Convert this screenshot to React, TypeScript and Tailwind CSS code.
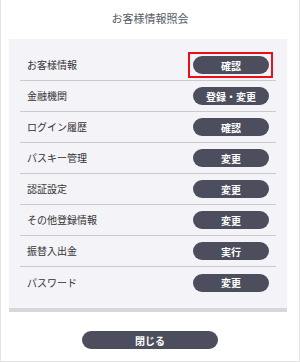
import React from "react";

const rows: { label: string; action: string; highlight?: boolean }[] = [
  { label: "お客様情報", action: "確認", highlight: true },
  { label: "金融機関", action: "登録・変更" },
  { label: "ログイン履歴", action: "確認" },
  { label: "パスキー管理", action: "変更" },
  { label: "認証設定", action: "変更" },
  { label: "その他登録情報", action: "変更" },
  { label: "振替入出金", action: "実行" },
  { label: "パスワード", action: "変更" },
];

export default function App() {
  return (
    <div
      className="w-[300px] h-[362px] bg-white border-x border-b border-[#e3e3e3] flex flex-col"
      style={{ fontFamily: '"Noto Sans CJK JP", "Noto Sans", sans-serif' }}
    >
      <div className="h-[39px] flex items-center justify-center text-[11px] text-[#555a66] pb-[3px]">
        お客様情報照会
      </div>
      <div className="mx-[8px] w-[278px] bg-[#f4f4f8] border-b-[4px] border-[#d7d7d9] pt-[11px] pb-[10px]">
        {rows.map((r, i) => (
          <div
            key={r.label}
            className={`mx-[11px] h-[31px] flex items-center justify-between px-[7px] ${
              i < rows.length - 1 ? "border-b border-[#cacacc]" : ""
            }`}
          >
            <span className="text-[10px] text-[#333333] pb-[1px]">{r.label}</span>
            <span className="relative">
              {r.highlight ? (
                <span className="absolute -left-[5px] -right-[4px] -top-[4px] -bottom-[4px] border-2 border-[#e8101a]" />
              ) : null}
              <span className="relative w-[76px] h-[18px] rounded-full bg-[#4c4e5d] text-white text-[10px] font-bold flex items-center justify-center">
                {r.action}
              </span>
            </span>
          </div>
        ))}
      </div>
      <div className="flex justify-center pt-[19px]">
        <span className="w-[136px] h-[18px] rounded-full bg-[#4c4e5d] text-white text-[10px] font-bold flex items-center justify-center">
          閉じる
        </span>
      </div>
    </div>
  );
}
